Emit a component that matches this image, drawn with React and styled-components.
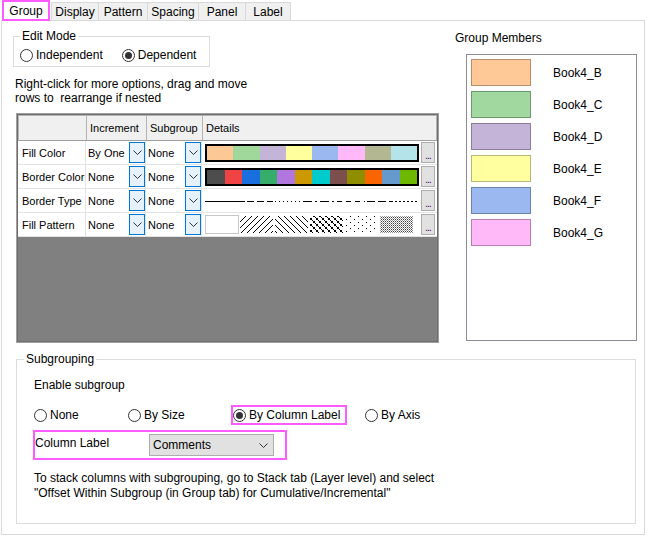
import React from 'react';
import styled, { createGlobalStyle } from 'styled-components';

const GlobalStyle = createGlobalStyle`
  html, body {
    margin: 0;
    padding: 0;
    background: #fff;
  }
  body {
    font-family: "Liberation Sans", Arial, sans-serif;
    font-size: 12px;
    color: #000;
  }
  * {
    box-sizing: border-box;
  }
`;

const PINK = '#ff5cff';

const tabs = [
    { name: 'Group', w: 48, active: true },
    { name: 'Display', w: 48 },
    { name: 'Pattern', w: 50 },
    { name: 'Spacing', w: 52 },
    { name: 'Panel', w: 48 },
    { name: 'Label', w: 46 },
];

const fillColors = ['#FCC896', '#A0D89C', '#C4B4D8', '#FFFF9E', '#9CB8F0', '#FFB8F8', '#B4B892', '#B4E4EA'];
const borderColors = [
    '#4D4D4D', '#F04343', '#1A6FDF', '#37AD6B', '#B177DE', '#CC9900',
    '#00CBCC', '#7D4E4E', '#8E8E00', '#FB6500', '#6699CC', '#6FB802',
];

const rows = [
    { label: 'Fill Color', inc: 'By One', sub: 'None', kind: 'fill' },
    { label: 'Border Color', inc: 'None', sub: 'None', kind: 'border' },
    { label: 'Border Type', inc: 'None', sub: 'None', kind: 'line' },
    { label: 'Fill Pattern', inc: 'None', sub: 'None', kind: 'pattern' },
];

const members = [
    { name: 'Book4_B', fill: '#FFC896', edge: '#B4906C' },
    { name: 'Book4_C', fill: '#A0D8A0', edge: '#6C9A6E' },
    { name: 'Book4_D', fill: '#C4B4D8', edge: '#8A7E9A' },
    { name: 'Book4_E', fill: '#FFFFA0', edge: '#B8B878' },
    { name: 'Book4_F', fill: '#9CB8F0', edge: '#6A84AC' },
    { name: 'Book4_G', fill: '#FFB8F8', edge: '#BA80B4' },
];

const lineSegments = [
    { x1: 0, x2: 40, dash: 'none' },
    { x1: 42, x2: 68, dash: '7 3' },
    { x1: 70, x2: 98, dash: '1 3' },
    { x1: 98, x2: 130, dash: '9 3 2 3' },
    { x1: 132, x2: 160, dash: '5 4' },
    { x1: 162, x2: 188, dash: '8 3' },
    { x1: 190, x2: 214, dash: '2 2' },
];

function Chevron() {
    return (
        <svg width="9" height="5" viewBox="0 0 9 5">
            <polyline points="0.5,0.5 4.5,4.5 8.5,0.5" fill="none" stroke="#333" strokeWidth="1" />
        </svg>
    );
}

function Radio({ checked, label }) {
    return (
        <RadioItem>
            <RadioCircle $checked={checked} />
            <span>{label}</span>
        </RadioItem>
    );
}

function LineStyles() {
    return (
        <svg width="214" height="18" viewBox="0 0 214 18">
            {lineSegments.map((s, i) => (
                <line
                    key={i}
                    x1={s.x1}
                    x2={s.x2}
                    y1="9.5"
                    y2="9.5"
                    stroke="#000"
                    strokeWidth="1"
                    strokeDasharray={s.dash}
                />
            ))}
        </svg>
    );
}

function FillPatterns() {
    return (
        <svg width="210" height="19" viewBox="0 0 210 19">
            <defs>
                <pattern id="fwd" width="6" height="6" patternUnits="userSpaceOnUse">
                    <line x1="0" y1="6" x2="6" y2="0" stroke="#000" strokeWidth="1" />
                </pattern>
                <pattern id="bwd" width="6" height="6" patternUnits="userSpaceOnUse">
                    <line x1="0" y1="0" x2="6" y2="6" stroke="#000" strokeWidth="1" />
                </pattern>
                <pattern id="cross" width="6" height="6" patternUnits="userSpaceOnUse">
                    <rect x="0" y="0" width="2" height="2" fill="#000" />
                    <rect x="3" y="3" width="2" height="2" fill="#000" />
                    <rect x="2" y="2" width="1" height="1" fill="#000" />
                    <rect x="5" y="5" width="1" height="1" fill="#000" />
                </pattern>
                <pattern id="dots" width="8" height="6" patternUnits="userSpaceOnUse">
                    <rect x="1" y="1" width="1" height="1" fill="#000" />
                    <rect x="5" y="4" width="1" height="1" fill="#000" />
                </pattern>
                <pattern id="fine" width="2" height="2" patternUnits="userSpaceOnUse">
                    <rect x="0" y="0" width="1" height="1" fill="#444" />
                    <rect x="1" y="1" width="1" height="1" fill="#999" />
                </pattern>
            </defs>
            <rect x="0.5" y="0.5" width="33" height="18" fill="#fff" stroke="#c8c8c8" />
            <rect x="35" y="1" width="33" height="17" fill="url(#fwd)" />
            <rect x="70" y="1" width="33" height="17" fill="url(#bwd)" />
            <rect x="105" y="1" width="33" height="17" fill="url(#cross)" />
            <rect x="140" y="1" width="33" height="17" fill="url(#dots)" />
            <rect x="175" y="1" width="33" height="17" fill="url(#fine)" />
        </svg>
    );
}

function Details({ kind }) {
    if (kind === 'fill') {
        return (
            <ColorStrip>
                {fillColors.map((c) => (
                    <Swatch key={c} $color={c} />
                ))}
            </ColorStrip>
        );
    }
    if (kind === 'border') {
        return (
            <ColorStrip>
                {borderColors.map((c) => (
                    <Swatch key={c} $color={c} />
                ))}
            </ColorStrip>
        );
    }
    if (kind === 'line') {
        return (
            <PlainStrip>
                <LineStyles />
            </PlainStrip>
        );
    }
    return (
        <PlainStrip>
            <FillPatterns />
        </PlainStrip>
    );
}

export default function App() {
    return (
        <Window>
            <GlobalStyle />
            <TabBar>
                {tabs.map((t) => (
                    <Tab key={t.name} $active={t.active} $w={t.w}>
                        {t.name}
                    </Tab>
                ))}
            </TabBar>

            <Panel>
                <TopSection>
                    <LeftCol>
                        <EditModeBox>
                            <GroupTitle>Edit Mode</GroupTitle>
                            <RadioRow>
                                <Radio label="Independent" />
                                <Radio label="Dependent" checked />
                            </RadioRow>
                        </EditModeBox>

                        <Hint>
                            Right-click for more options, drag and move
                            <br />
                            {'rows to\u00a0 rearrange if nested'}
                        </Hint>

                        <TableFrame>
                            <HeaderRow>
                                <HeadCell />
                                <HeadCell>Increment</HeadCell>
                                <HeadCell>Subgroup</HeadCell>
                                <HeadCell $last>Details</HeadCell>
                            </HeaderRow>
                            {rows.map((r) => (
                                <DataRow key={r.label}>
                                    <LabelCell>{r.label}</LabelCell>
                                    <SelectCell>
                                        <span>{r.inc}</span>
                                        <DropButton>
                                            <Chevron />
                                        </DropButton>
                                    </SelectCell>
                                    <SelectCell>
                                        <span>{r.sub}</span>
                                        <DropButton>
                                            <Chevron />
                                        </DropButton>
                                    </SelectCell>
                                    <DetailCell>
                                        <Details kind={r.kind} />
                                        <DotsButton>...</DotsButton>
                                    </DetailCell>
                                </DataRow>
                            ))}
                            <EmptyArea />
                        </TableFrame>
                    </LeftCol>

                    <RightCol>
                        <MembersTitle>Group Members</MembersTitle>
                        <MemberList>
                            {members.map((m) => (
                                <MemberRow key={m.name}>
                                    <MemberSwatch $fill={m.fill} $edge={m.edge} />
                                    <span>{m.name}</span>
                                </MemberRow>
                            ))}
                        </MemberList>
                    </RightCol>
                </TopSection>

                <SubgroupBox>
                    <SubgroupTitle>Subgrouping</SubgroupTitle>
                    <EnableLine>Enable subgroup</EnableLine>
                    <SubRadioRow>
                        <RadioSlot $w={94}>
                            <Radio label="None" />
                        </RadioSlot>
                        <RadioSlot $w={103}>
                            <Radio label="By Size" />
                        </RadioSlot>
                        <HighlightRadio>
                            <Radio label="By Column Label" checked />
                        </HighlightRadio>
                        <RadioSlot $w={80} $gap={18}>
                            <Radio label="By Axis" />
                        </RadioSlot>
                    </SubRadioRow>
                    <ColumnLabelBox>
                        <FieldLabel>Column Label</FieldLabel>
                        <Combo>
                            <span>Comments</span>
                            <Chevron />
                        </Combo>
                    </ColumnLabelBox>
                    <Note>
                        To stack columns with subgrouping, go to Stack tab (Layer level) and select
                        <br />
                        "Offset Within Subgroup (in Group tab) for Cumulative/Incremental"
                    </Note>
                </SubgroupBox>
            </Panel>
        </Window>
    );
}

const Window = styled.div`
    width: 649px;
    height: 536px;
    background: #fff;
    overflow: hidden;
`;

const TabBar = styled.div`
    display: flex;
    align-items: flex-end;
    height: 21px;
    margin-bottom: -1px;
    padding-left: 2px;
    position: relative;
    z-index: 1;
`;

const Tab = styled.div`
    width: ${(p) => p.$w}px;
    height: ${(p) => (p.$active ? '21px' : '18px')};
    margin-bottom: ${(p) => (p.$active ? '0' : '1px')};
    margin-left: ${(p) => (p.$active ? '0' : '-1px')};
    display: flex;
    align-items: center;
    justify-content: center;
    background: ${(p) => (p.$active ? '#fff' : '#f0f0f0')};
    border: ${(p) => (p.$active ? `2px solid ${PINK}` : '1px solid #d9d9d9')};
    border-bottom: ${(p) => (p.$active ? `2px solid ${PINK}` : 'none')};
    &:nth-child(2) {
        margin-left: 1px;
    }
`;

const Panel = styled.div`
    margin-left: 1px;
    width: 644px;
    height: 515px;
    border: 1px solid #d9d9d9;
`;

const TopSection = styled.div`
    display: flex;
    padding: 8px 0 0 11px;
`;

const LeftCol = styled.div`
    width: 427px;
    display: flex;
    flex-direction: column;
`;

const RightCol = styled.div`
    margin-left: 15px;
    display: flex;
    flex-direction: column;
    padding-top: 2px;
`;

const GroupBox = styled.fieldset`
    margin: 0;
    min-width: 0;
    border: 1px solid #dcdcdc;
`;

const GroupTitle = styled.legend`
    padding: 0 2px;
    line-height: 14px;
    font-size: 12px;
`;

const EditModeBox = styled(GroupBox)`
    width: 197px;
    padding: 5px 0 4px 6px;
`;

const RadioRow = styled.div`
    display: flex;
    gap: 19px;
    line-height: 14px;
`;

const RadioItem = styled.label`
    display: inline-flex;
    align-items: center;
    gap: 3px;
    line-height: 14px;
    white-space: nowrap;
`;

const RadioCircle = styled.span`
    width: 13px;
    height: 13px;
    border-radius: 50%;
    border: 1px solid #333;
    background: #fff;
    display: inline-flex;
    align-items: center;
    justify-content: center;
    &::after {
        content: '';
        width: 7px;
        height: 7px;
        border-radius: 50%;
        background: #333;
        display: ${(p) => (p.$checked ? 'block' : 'none')};
    }
`;

const Hint = styled.div`
    margin-top: 10px;
    padding-left: 2px;
    line-height: 14px;
`;

const TableFrame = styled.div`
    margin-top: 8px;
    margin-left: 3px;
    width: 423px;
    height: 230px;
    border: 1px solid #a0a0a0;
    box-shadow: inset 0 0 0 1px #6d6d6d;
    padding: 1px;
    display: flex;
    flex-direction: column;
    font-size: 11px;
`;

const columns = '68px 60px 56px 1fr';

const HeaderRow = styled.div`
    display: grid;
    grid-template-columns: ${columns};
    height: 26px;
    background: #f0f0f0;
    border: 1px solid #b4b4b4;
    border-bottom: 1px solid #a0a0a0;
`;

const HeadCell = styled.div`
    display: flex;
    align-items: center;
    padding-left: 3px;
    border-right: ${(p) => (p.$last ? 'none' : '1px solid #b4b4b4')};
`;

const DataRow = styled.div`
    display: grid;
    grid-template-columns: ${columns};
    height: 24px;
    background: #fff;
    border-bottom: 1px solid #e3e3e3;
`;

const LabelCell = styled.div`
    display: flex;
    align-items: center;
    padding-left: 4px;
    border-right: 1px solid #e3e3e3;
    white-space: nowrap;
`;

const SelectCell = styled.div`
    display: flex;
    align-items: center;
    padding-left: 2px;
    border-right: 1px solid #e3e3e3;
`;

const DropButton = styled.div`
    margin-left: auto;
    width: 16px;
    height: 21px;
    background: #e5f1fb;
    border: 1px solid #0078d7;
    display: flex;
    align-items: center;
    justify-content: center;
`;

const DetailCell = styled.div`
    display: flex;
    align-items: center;
    padding-left: 3px;
    gap: 2px;
`;

const ColorStrip = styled.div`
    width: 214px;
    height: 18px;
    border: 2px solid #000;
    display: flex;
`;

const Swatch = styled.div`
    flex: 1;
    background: ${(p) => p.$color};
`;

const PlainStrip = styled.div`
    width: 214px;
    height: 19px;
    display: flex;
    align-items: center;
`;

const DotsButton = styled.div`
    width: 14px;
    height: 21px;
    background: #e1e1e1;
    border: 1px solid #adadad;
    display: flex;
    align-items: flex-end;
    justify-content: center;
    font-size: 10px;
    line-height: 12px;
    color: #3a0066;
    letter-spacing: -1px;
`;

const EmptyArea = styled.div`
    flex: 1;
    background: #808080;
`;

const MembersTitle = styled.div`
    line-height: 14px;
`;

const MemberList = styled.div`
    margin-top: 9px;
    margin-left: 11px;
    width: 171px;
    height: 287px;
    border: 1px solid #8c8c96;
    padding: 4px 0 0 4px;
    display: flex;
    flex-direction: column;
    gap: 5px;
`;

const MemberRow = styled.div`
    display: flex;
    align-items: center;
    gap: 22px;
`;

const MemberSwatch = styled.div`
    width: 60px;
    height: 27px;
    background: ${(p) => p.$fill};
    border: 1px solid ${(p) => p.$edge};
`;

const SubgroupBox = styled(GroupBox)`
    margin: 9px 0 0 14px;
    width: 620px;
    height: 172px;
    padding: 0 0 0 17px;
`;

const SubgroupTitle = styled(GroupTitle)`
    margin-left: -10px;
`;

const EnableLine = styled.div`
    margin-top: 12px;
    line-height: 14px;
`;

const SubRadioRow = styled.div`
    margin-top: 13px;
    height: 20px;
    display: flex;
    align-items: center;
`;

const RadioSlot = styled.div`
    width: ${(p) => p.$w}px;
    margin-left: ${(p) => p.$gap || 0}px;
    display: flex;
    align-items: center;
`;

const HighlightRadio = styled.div`
    width: 116px;
    height: 20px;
    border: 2px solid ${PINK};
    display: flex;
    align-items: center;
`;

const ColumnLabelBox = styled.div`
    margin-top: 5px;
    margin-left: -1px;
    width: 254px;
    height: 30px;
    border: 2px solid ${PINK};
    display: flex;
    align-items: center;
`;

const FieldLabel = styled.div`
    width: 114px;
    margin-top: -5px;
`;

const Combo = styled.div`
    width: 125px;
    height: 22px;
    background: #e1e1e1;
    border: 1px solid #adadad;
    display: flex;
    align-items: center;
    justify-content: space-between;
    padding: 0 5px 0 3px;
`;

const Note = styled.div`
    margin-top: 11px;
    line-height: 15px;
`;
